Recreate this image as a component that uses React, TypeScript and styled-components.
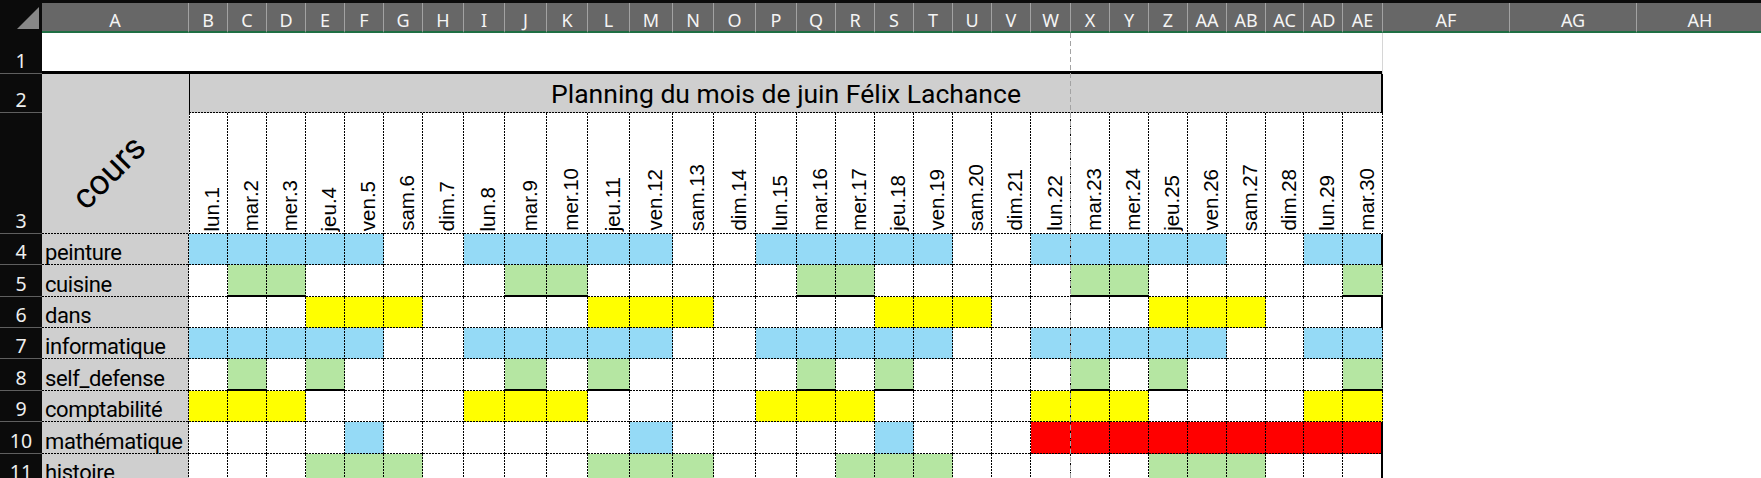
import React from 'react';
import styled, { createGlobalStyle, css } from 'styled-components';

const GlobalStyle = createGlobalStyle`
  html, body {
    margin: 0;
    padding: 0;
    background: #fff;
    overflow: hidden;
  }
`;

type Edge = 'none' | 'dash' | 'solid' | 'thick' | 'thick3' | 'light';

interface EdgeProps {
  $fill?: string;
  $r?: Edge;
  $b?: Edge;
  $l?: Edge;
}

const WIDTH: Record<string, number> = { solid: 1, light: 1, thick: 2, thick3: 3 };

// excel-like borders: dashed ones as tiled gradients, solid ones as inset shadows
const edges = ({ $fill = '#fff', $r = 'dash', $b = 'dash', $l = 'none' }: EdgeProps) => {
  const layers: string[] = [];
  if ($r === 'dash') layers.push('linear-gradient(#000 2px, transparent 2px) right top / 1px 3px repeat-y');
  if ($l === 'dash') layers.push('linear-gradient(#000 2px, transparent 2px) left top / 1px 3px repeat-y');
  if ($b === 'dash') layers.push('linear-gradient(90deg, #000 2px, transparent 2px) left bottom / 3px 1px repeat-x');

  const shadows: string[] = [];
  if ($r in WIDTH) shadows.push(`inset -${WIDTH[$r]}px 0 0 ${$r === 'light' ? '#d6d6d6' : '#000'}`);
  if ($l in WIDTH) shadows.push(`inset ${WIDTH[$l]}px 0 0 #000`);
  if ($b in WIDTH) shadows.push(`inset 0 -${WIDTH[$b]}px 0 #000`);

  return css`
    background: ${[...layers, $fill].join(', ')};
    box-shadow: ${shadows.length ? shadows.join(', ') : 'none'};
  `;
};

const DAY_WIDTHS = [
  39, 39, 39, 39, 39, 39, 41, 41, 42, 41, 42, 43, 41, 42, 41,
  39, 39, 39, 39, 39, 39, 40, 39, 39, 39, 39, 39, 38, 39, 40,
];

const LETTERS = [
  'A', 'B', 'C', 'D', 'E', 'F', 'G', 'H', 'I', 'J', 'K', 'L', 'M', 'N', 'O', 'P', 'Q',
  'R', 'S', 'T', 'U', 'V', 'W', 'X', 'Y', 'Z', 'AA', 'AB', 'AC', 'AD', 'AE', 'AF', 'AG', 'AH',
];

const DOW = ['lun', 'mar', 'mer', 'jeu', 'ven', 'sam', 'dim'];
const DAYS = DAY_WIDTHS.map((_, i) => `${DOW[i % 7]}.${i + 1}`);

const FILLS: Record<string, string> = {
  b: '#95daf6',
  g: '#b5e6a2',
  y: '#ffff00',
  r: '#ff0000',
  '.': '#fff',
};

const COURSES = [
  { name: 'peinture', plan: 'bbbbb..bbbbb..bbbbb..bbbbb..bb', edge: true },
  { name: 'cuisine', plan: '.gg.....gg.....gg.....gg.....g', underline: true },
  { name: 'dans', plan: '...yyy....yyy....yyy....yyy...', edge: true },
  { name: 'informatique', plan: 'bbbbb..bbbbb..bbbbb..bbbbb..bb' },
  { name: 'self_defense', plan: '.g.g....g.g....g.g....g.g....g', underline: true },
  { name: 'comptabilité', plan: 'yyy....yyy....yyy....yyy....yy' },
  { name: 'mathématique', plan: '....b......b.....b...rrrrrrrrr', edge: true },
  { name: 'histoire', plan: '...ggg....ggg...ggg.....ggg...', edge: true },
];

const ROW_HEIGHTS = [30, 41, 39, 121, 31, 32, 31, 31, 32, 31, 32, 31];

const Sheet = styled.div`
  position: relative;
  display: grid;
  grid-template-columns: 42px 147px ${DAY_WIDTHS.map((w) => `${w}px`).join(' ')} 127px 127px 127px;
  grid-template-rows: ${ROW_HEIGHTS.map((h) => `${h}px`).join(' ')};
  border-top: 3px solid #0b0b0b;
  width: max-content;
`;

const Corner = styled.div`
  background: #0b0b0b;
  display: flex;
  align-items: flex-end;
  justify-content: flex-end;
  padding: 0 3px 4px 0;
`;

const ColHead = styled.div`
  box-sizing: border-box;
  display: flex;
  align-items: center;
  justify-content: center;
  padding-top: 6px;
  background: #676767;
  border-right: 1px solid #a2a2a2;
  border-bottom: 2px solid #1f6e43;
  color: #f4f4f4;
  font: 18px 'Noto Sans', sans-serif;
`;

const RowHead = styled.div`
  box-sizing: border-box;
  display: flex;
  align-items: flex-end;
  justify-content: center;
  background: #0b0b0b;
  border-bottom: 1px solid #5f5f5f;
  color: #eeeeee;
  font: 19.5px/1.3 'Noto Sans', sans-serif;
`;

const Blank = styled.div<EdgeProps>`
  ${edges}
`;

const CoursCell = styled.div<EdgeProps>`
  ${edges}
  grid-row: span 2;
  display: flex;
  align-items: flex-end;
  justify-content: center;
  padding-bottom: 44px;
`;

const CoursText = styled.span`
  margin-right: 14px;
  font: 35px/1 Roboto, sans-serif;
  color: #000;
  transform: rotate(-45deg);
`;

const TitleCell = styled.div<EdgeProps>`
  ${edges}
  grid-column: span 30;
  display: flex;
  align-items: center;
  justify-content: center;
  font: 26.5px Roboto, sans-serif;
  color: #000;
`;

const DayCell = styled.div<EdgeProps>`
  ${edges}
  display: flex;
  align-items: flex-end;
  justify-content: center;
  padding: 0 0 3px 7px;
`;

const DayText = styled.span`
  writing-mode: vertical-rl;
  transform: rotate(180deg);
  white-space: nowrap;
  font: 20.5px 'Liberation Sans', Arial, sans-serif;
  color: #000;
`;

const LabelCell = styled.div<EdgeProps>`
  ${edges}
  display: flex;
  align-items: flex-end;
  padding: 0 0 0 3px;
  font: 22px Roboto, sans-serif;
  letter-spacing: -0.4px;
  color: #000;
  white-space: nowrap;
  overflow: hidden;
`;

const PlanCell = styled.div<EdgeProps>`
  ${edges}
`;

const PageBreak = styled.div`
  position: absolute;
  left: 1070px;
  top: 30px;
  bottom: 0;
  width: 1px;
  background: repeating-linear-gradient(to bottom, #a3a3a3 0 5px, transparent 5px 8px);
  pointer-events: none;
`;

const SpareCells = () => (
  <>
    <Blank $r="none" $b="none" />
    <Blank $r="none" $b="none" />
    <Blank $r="none" $b="none" />
  </>
);

const App = () => (
  <>
    <GlobalStyle />
    <Sheet>
      <Corner>
        <svg width="22" height="22" viewBox="0 0 22 22">
          <polygon points="22,0 22,22 0,22" fill="#878787" />
        </svg>
      </Corner>
      {LETTERS.map((l) => (
        <ColHead key={l}>{l}</ColHead>
      ))}

      <RowHead>1</RowHead>
      {LETTERS.map((l, i) => (
        <Blank key={l} $r={i === 30 ? 'light' : 'none'} $b={i <= 30 ? 'thick3' : 'none'} />
      ))}

      <RowHead>2</RowHead>
      <CoursCell $fill="#cfcfcf" $r="none">
        <CoursText>cours</CoursText>
      </CoursCell>
      <TitleCell $fill="#cfcfcf" $l="solid" $r="thick">
        Planning du mois de juin Félix Lachance
      </TitleCell>
      <SpareCells />

      <RowHead>3</RowHead>
      {DAYS.map((d, i) => (
        <DayCell key={d} $l={i === 0 ? 'dash' : 'none'}>
          <DayText>{d}</DayText>
        </DayCell>
      ))}
      <SpareCells />

      {COURSES.map((c, ri) => (
        <React.Fragment key={c.name}>
          <RowHead>{ri + 4}</RowHead>
          <LabelCell $fill="#cfcfcf">{c.name}</LabelCell>
          {c.plan.split('').map((f, i) => (
            <PlanCell
              key={i}
              $fill={FILLS[f]}
              $r={i === 29 && c.edge ? 'thick' : 'dash'}
              $b={c.underline && f === 'g' ? 'thick' : 'dash'}
            />
          ))}
          <SpareCells />
        </React.Fragment>
      ))}

      <PageBreak />
    </Sheet>
  </>
);

export default App;
